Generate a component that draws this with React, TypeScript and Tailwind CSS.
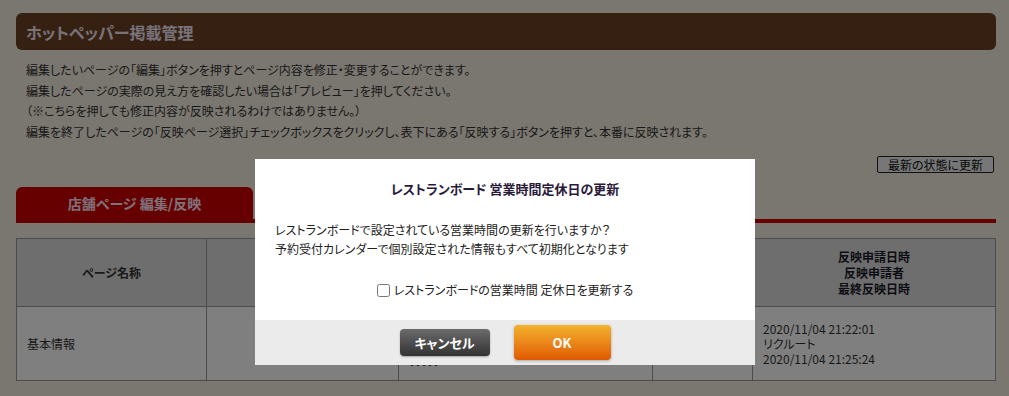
import { useState } from 'react';

function PageBody() {
    return (
        <div className="ml-4 w-[980px] pt-[13px] text-[#333]">
            <div className="flex h-[37px] items-center rounded-md bg-[#6a4022] pl-[10px] text-[16px] font-bold text-[#f0e4f2]">
                ホットペッパー掲載管理
            </div>

            <div className="mt-[10px] pl-[10px] text-[12px] leading-[20.5px]">
                <p>編集したいページの「編集」ボタンを押すとページ内容を修正・変更することができます。</p>
                <p>編集したページの実際の見え方を確認したい場合は「プレビュー」を押してください。</p>
                <p>（※こちらを押しても修正内容が反映されるわけではありません。）</p>
                <p>編集を終了したページの「反映ページ選択」チェックボックスをクリックし、表下にある「反映する」ボタンを押すと、本番に反映されます。</p>
            </div>

            <div className="mt-[14px] flex justify-end pr-[2px]">
                <button className="h-[17px] rounded-[2px] border border-[#222] bg-[#eeeeee] px-[10px] text-[12px] leading-[15px] text-[#111]">
                    最新の状態に更新
                </button>
            </div>

            <div className="mt-[14px] border-b-4 border-[#cc0000]">
                <div className="flex h-[32px] w-[237px] items-center justify-center rounded-t-md bg-[#cc0000] text-[14px] font-bold text-[#ffe2f2]">
                    店舗ページ 編集/反映
                </div>
            </div>

            <table className="mt-[15px] w-full border-collapse text-[12px]">
                <thead>
                    <tr className="h-[68px] bg-[#dcdcdc] font-bold">
                        <th className="w-[190px] border border-[#999]">ページ名称</th>
                        <th className="w-[192px] border border-[#999]">プレビュー</th>
                        <th className="w-[254px] border border-[#999]">編集</th>
                        <th className="w-[100px] border border-[#999]">反映ページ選択</th>
                        <th className="border border-[#999] leading-[16px] text-[#1a1a2a]">
                            反映申請日時<br />反映申請者<br />最終反映日時
                        </th>
                    </tr>
                </thead>
                <tbody>
                    <tr className="h-[74px] bg-white">
                        <td className="border border-[#999] pl-[10px]">基本情報</td>
                        <td className="border border-[#999]"></td>
                        <td className="border border-[#999] pl-[10px] align-bottom">
                            <div className="pb-[6px]">・・・・・</div>
                        </td>
                        <td className="border border-[#999]"></td>
                        <td className="border border-[#999] pl-[10px] leading-[15px]">
                            <div>2020/11/04 21:22:01</div>
                            <div>リクルート</div>
                            <div>2020/11/04 21:25:24</div>
                        </td>
                    </tr>
                </tbody>
            </table>
        </div>
    );
}

function UpdateDialog() {
    const [checked, setChecked] = useState(false);

    return (
        <div className="fixed left-[255px] top-[159px] w-[500px] bg-white text-[#222]">
            <div className="pt-[21px] text-center text-[13px] font-bold leading-[18px] text-[#2a1a3a]">
                レストランボード 営業時間定休日の更新
            </div>
            <div className="mt-[22px] px-[20px] text-[12px] leading-[19px]">
                <p>レストランボードで設定されている営業時間の更新を行いますか？</p>
                <p>予約受付カレンダーで個別設定された情報もすべて初期化となります</p>
            </div>
            <label className="mt-[23px] flex h-[18px] items-center justify-center gap-[4px] text-[12px]">
                <input
                    type="checkbox"
                    checked={checked}
                    onChange={(e) => setChecked(e.target.checked)}
                    className="h-[13px] w-[13px]"
                />
                レストランボードの営業時間 定休日を更新する
            </label>
            <div className="mt-[21px] flex h-[45px] items-center justify-center gap-[24px] bg-[#ebebeb]">
                <button className="h-[27px] w-[90px] rounded-[4px] bg-gradient-to-b from-[#6c6c6c] to-[#333333] text-[13px] font-bold text-white shadow-[0_1px_2px_rgba(0,0,0,0.3)]">
                    キャンセル
                </button>
                <button className="h-[35px] w-[97px] rounded-[4px] bg-gradient-to-b from-[#f2b22c] to-[#e05800] text-[13px] font-bold text-white shadow-[0_1px_3px_rgba(0,0,0,0.3)]">
                    OK
                </button>
            </div>
        </div>
    );
}

export default function App() {
    return (
        <div className="relative h-[396px] w-full overflow-hidden bg-[#f5eee0] font-['Noto_Sans_CJK_JP','Noto_Sans',sans-serif] [font-feature-settings:'palt']">
            <PageBody />
            <div className="fixed inset-0 bg-black/50" />
            <UpdateDialog />
        </div>
    );
}
